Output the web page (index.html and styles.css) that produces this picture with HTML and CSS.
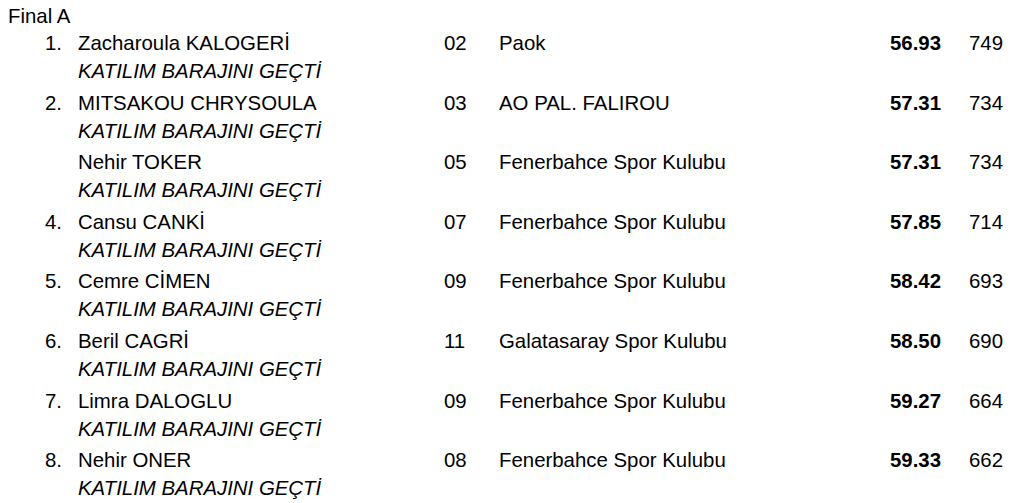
FILE: index.html
```html
<!DOCTYPE html>
<html lang="tr">
<head>
<meta charset="utf-8">
<title>Final A</title>
<link rel="stylesheet" href="styles.css">
</head>
<body>
<div class="page">
  <div class="heading">Final A</div>
  <div class="results">
    <div class="row">
      <span class="rank">1.</span><span class="name">Zacharoula KALOGERİ</span><span class="yob">02</span><span class="club">Paok</span><span class="time">56.93</span><span class="pts">749</span>
      <span class="note">KATILIM BARAJINI GEÇTİ</span>
    </div>
    <div class="row">
      <span class="rank">2.</span><span class="name">MITSAKOU CHRYSOULA</span><span class="yob">03</span><span class="club">AO PAL. FALIROU</span><span class="time">57.31</span><span class="pts">734</span>
      <span class="note">KATILIM BARAJINI GEÇTİ</span>
    </div>
    <div class="row">
      <span class="rank"></span><span class="name">Nehir TOKER</span><span class="yob">05</span><span class="club">Fenerbahce Spor Kulubu</span><span class="time">57.31</span><span class="pts">734</span>
      <span class="note">KATILIM BARAJINI GEÇTİ</span>
    </div>
    <div class="row">
      <span class="rank">4.</span><span class="name">Cansu CANKİ</span><span class="yob">07</span><span class="club">Fenerbahce Spor Kulubu</span><span class="time">57.85</span><span class="pts">714</span>
      <span class="note">KATILIM BARAJINI GEÇTİ</span>
    </div>
    <div class="row">
      <span class="rank">5.</span><span class="name">Cemre CİMEN</span><span class="yob">09</span><span class="club">Fenerbahce Spor Kulubu</span><span class="time">58.42</span><span class="pts">693</span>
      <span class="note">KATILIM BARAJINI GEÇTİ</span>
    </div>
    <div class="row">
      <span class="rank">6.</span><span class="name">Beril CAGRİ</span><span class="yob">11</span><span class="club">Galatasaray Spor Kulubu</span><span class="time">58.50</span><span class="pts">690</span>
      <span class="note">KATILIM BARAJINI GEÇTİ</span>
    </div>
    <div class="row">
      <span class="rank">7.</span><span class="name">Limra DALOGLU</span><span class="yob">09</span><span class="club">Fenerbahce Spor Kulubu</span><span class="time">59.27</span><span class="pts">664</span>
      <span class="note">KATILIM BARAJINI GEÇTİ</span>
    </div>
    <div class="row">
      <span class="rank">8.</span><span class="name">Nehir ONER</span><span class="yob">08</span><span class="club">Fenerbahce Spor Kulubu</span><span class="time">59.33</span><span class="pts">662</span>
      <span class="note">KATILIM BARAJINI GEÇTİ</span>
    </div>
  </div>
</div>
</body>
</html>
```
FILE: styles.css
```css
html, body {
  margin: 0;
  padding: 0;
  background: #fff;
}
body {
  font-family: "Liberation Sans", Arial, sans-serif;
  font-size: 20.4px;
  color: #000;
}
.page {
  padding: 3px 21px 0 8px;
}
.heading {
  line-height: 26px;
}
.results {
  display: flex;
  flex-direction: column;
}
.row {
  display: grid;
  grid-template-columns: 70px 366px 55px 1fr 80px 62px;
  line-height: 28px;
  margin-bottom: 3.6px;
}
.rank {
  text-align: right;
  padding-right: 16px;
}
.time {
  font-weight: bold;
  text-align: right;
}
.pts {
  text-align: right;
}
.note {
  grid-column: 2 / 7;
  font-style: italic;
}
```
